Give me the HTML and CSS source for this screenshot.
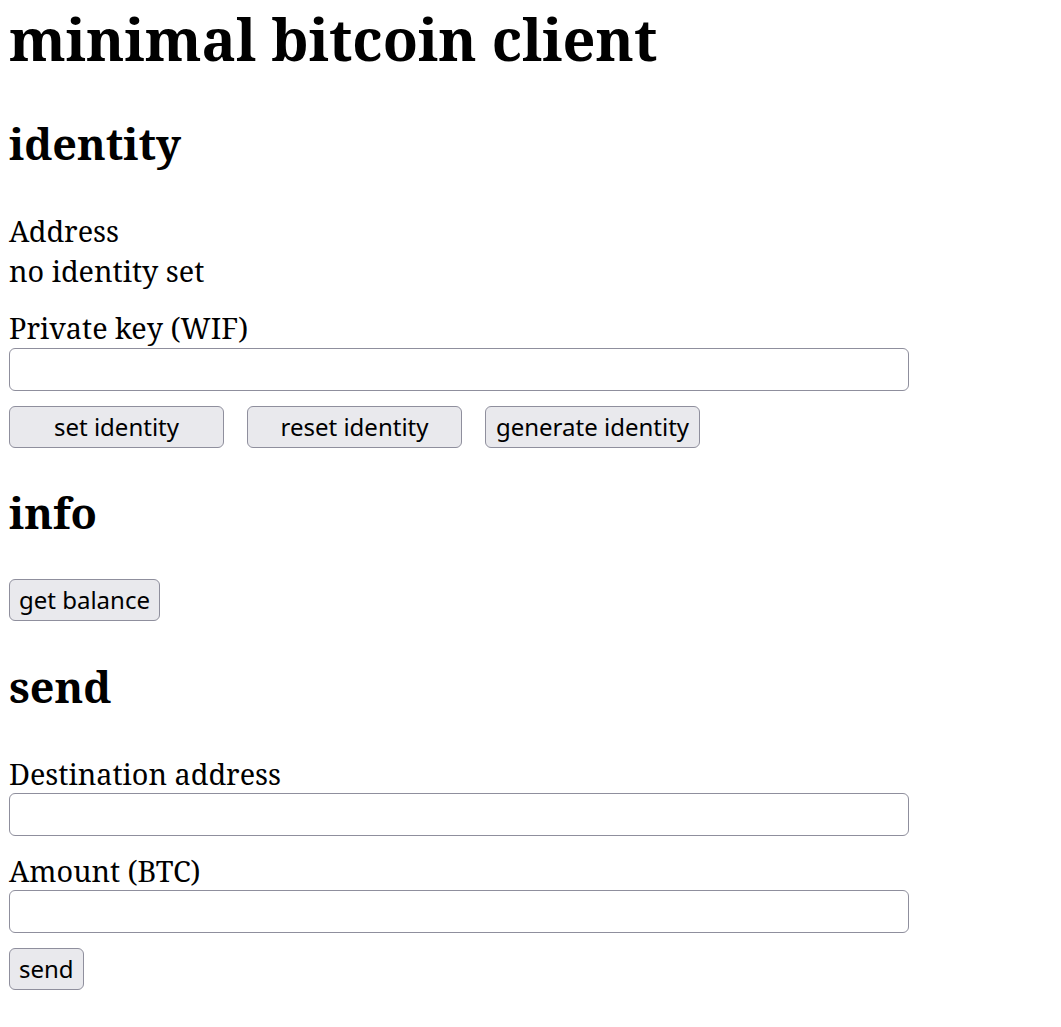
FILE: index.html
```html
<!DOCTYPE html>
<html lang="en">
<head>
<meta charset="utf-8">
<title>minimal bitcoin client</title>
<link rel="stylesheet" href="styles.css">
</head>
<body>
<h1 class="title">minimal bitcoin client</h1>

<section class="section">
  <h2 class="section-title">identity</h2>
  <div class="field">
    <div class="label">Address</div>
    <div class="value">no identity set</div>
  </div>
  <div class="field">
    <label class="label" for="wif">Private key (WIF)</label>
    <input class="text-input" id="wif" type="text">
  </div>
  <div class="actions">
    <button class="btn btn-wide">set identity</button>
    <button class="btn btn-wide">reset identity</button>
    <button class="btn btn-wide">generate identity</button>
  </div>
</section>

<section class="section">
  <h2 class="section-title">info</h2>
  <div class="actions">
    <button class="btn">get balance</button>
  </div>
</section>

<section class="section">
  <h2 class="section-title">send</h2>
  <div class="field">
    <label class="label" for="dest">Destination address</label>
    <input class="text-input" id="dest" type="text">
  </div>
  <div class="field field-after-input">
    <label class="label" for="amount">Amount (BTC)</label>
    <input class="text-input" id="amount" type="text">
  </div>
  <div class="actions">
    <button class="btn">send</button>
  </div>
</section>
</body>
</html>
```

FILE: styles.css
```css
html, body {
  background: #ffffff;
}
body {
  margin: 0;
  padding: 0 9px 20px;
  font-family: "Noto Serif", "DejaVu Serif", serif;
  font-size: 28.8px;
  line-height: 39.2px;
  color: #000000;
}
.title {
  margin: 0;
  font-size: 57.6px;
  line-height: 78.4px;
  font-weight: 700;
}
.section-title {
  margin: 36.6px 0 37.6px;
  font-size: 43.2px;
  line-height: 58.8px;
  font-weight: 700;
}
.field {
  margin-top: 18.6px;
  display: flex;
  flex-direction: column;
  align-items: flex-start;
}
.section-title + .field {
  margin-top: 0;
}
.field-after-input {
  margin-top: 15px;
}
.label, .value {
  display: block;
}
.text-input {
  box-sizing: border-box;
  width: 900px;
  height: 43px;
  margin: 0;
  border: 1px solid #8f8f9d;
  border-radius: 6px;
  background: #ffffff;
  font-family: "Noto Sans", sans-serif;
  font-size: 24px;
}
.actions {
  margin-top: 15px;
  display: flex;
  gap: 23px;
}
.section-title + .actions {
  margin-top: -1.6px;
}
.btn {
  box-sizing: border-box;
  height: 42px;
  margin: 0;
  padding: 0 9px;
  border: 1px solid #8f8f9d;
  border-radius: 6px;
  background: #e9e9ed;
  color: #000000;
  font-family: "Noto Sans", sans-serif;
  font-size: 24px;
  line-height: 32px;
}
.btn-wide {
  width: 215px;
}
```
